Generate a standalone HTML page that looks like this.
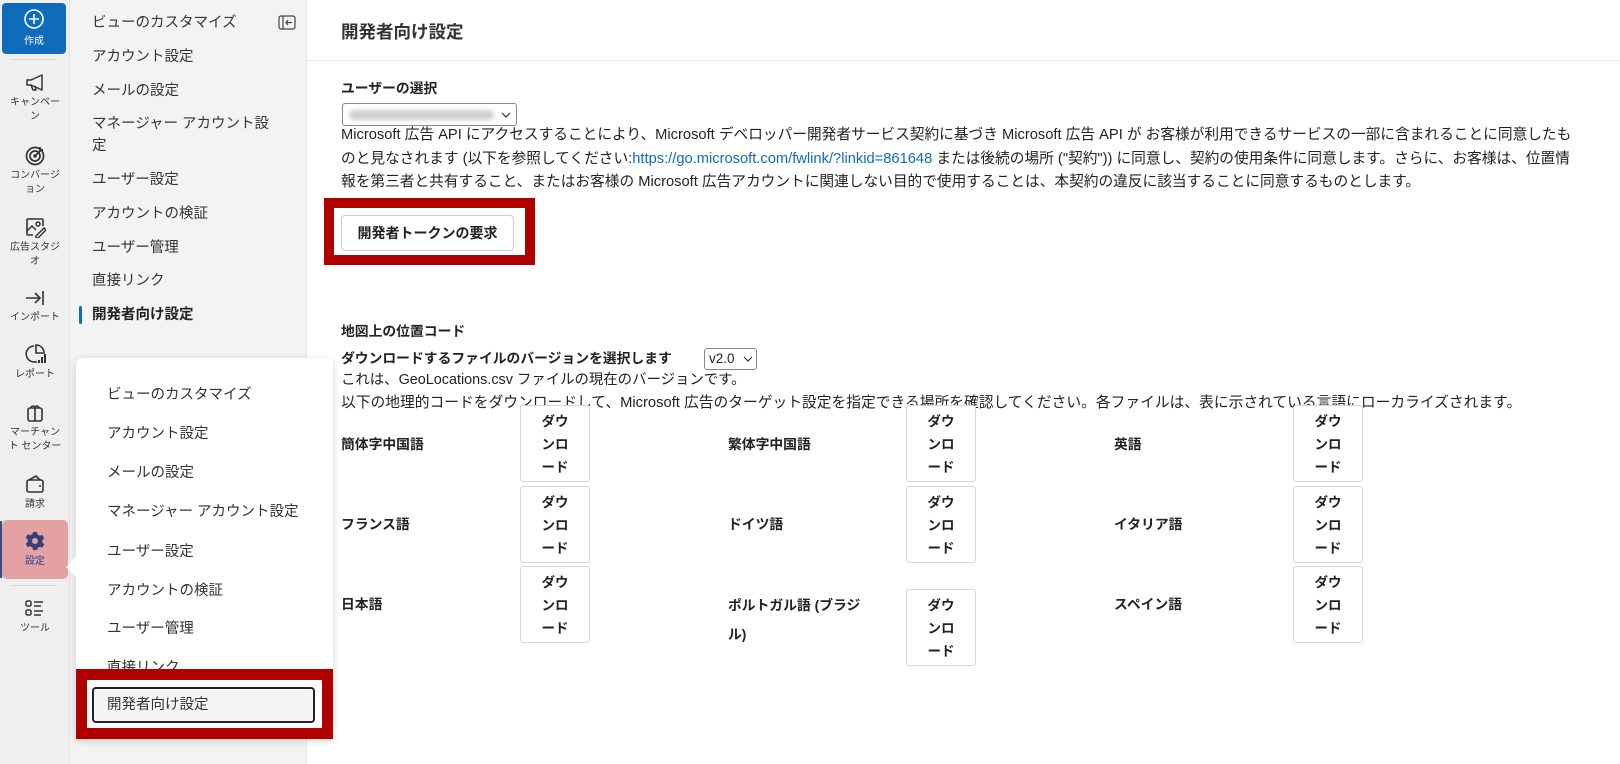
<!DOCTYPE html>
<html><head><meta charset="utf-8">
<style>
*{box-sizing:border-box;margin:0;padding:0}
body{width:1620px;height:764px;overflow:hidden;background:#fff;font-family:"Liberation Sans","Noto Sans CJK JP",sans-serif;color:#222;position:relative}
.abs{position:absolute}
#rail{left:0;top:0;width:70px;height:764px;background:#efefef;border-right:1px solid #e2e2e2}
.ri{position:absolute;left:0;width:70px;text-align:center;font-size:10px;line-height:14px;color:#333}
.ri svg{display:block;margin:0 auto 3px}
#sec{left:70px;top:0;width:237px;height:764px;background:#f3f3f3;border-right:1px solid #e6e6e6}
.si{position:absolute;left:22px;font-size:14.5px;color:#333;line-height:22px}
.main{font-size:14.4px;line-height:23.5px;color:#222}
.pi{position:absolute;left:31px;font-size:14.5px;color:#333}
.dl{position:absolute;width:70px;height:77px;border:1px solid #d6d6d6;border-radius:3px;background:#fff;font-weight:bold;font-size:13.5px;line-height:23px;text-align:center;padding-top:4px}
.lb{position:absolute;font-weight:bold;font-size:13.8px}
</style></head><body>
<div id="rail" class="abs">
  <div class="abs" style="left:2px;top:3px;width:64px;height:51px;background:#0f6cbd;border-radius:4px;color:#fff;text-align:center;font-size:10px">
    <svg width="22" height="22" viewBox="0 0 22 22" style="display:block;margin:5px auto 2px"><circle cx="11" cy="11" r="9" fill="none" stroke="#fff" stroke-width="1.6"/><path d="M11 6v10M6 11h10" stroke="#fff" stroke-width="1.6"/></svg>作成</div>
  <div class="abs" style="left:12px;top:59px;width:44px;height:1px;background:#d8d8d8"></div>
  <div class="ri" style="top:73px"><svg width="22" height="20" viewBox="0 0 22 20"><path d="M3 7h4l11-5v15L7 12H3z M7 12l2 5h3l-1-4" fill="none" stroke="#333" stroke-width="1.5" stroke-linejoin="round"/></svg>キャンペー<br>ン</div>
  <div class="ri" style="top:144px"><svg width="22" height="22" viewBox="0 0 22 22"><circle cx="11" cy="12" r="8.5" fill="none" stroke="#333" stroke-width="1.7"/><circle cx="11" cy="12" r="5" fill="none" stroke="#333" stroke-width="1.7"/><circle cx="11" cy="12" r="1.7" fill="#333"/><path d="M11 12l7-7M16 3v3h3" stroke="#333" stroke-width="1.7" fill="none"/></svg>コンバージ<br>ョン</div>
  <div class="ri" style="top:216px"><svg width="22" height="22" viewBox="0 0 22 22"><path d="M9 19H4a1 1 0 0 1-1-1V4a1 1 0 0 1 1-1h14a1 1 0 0 1 1 1v6" fill="none" stroke="#333" stroke-width="1.6"/><circle cx="14" cy="8" r="2" fill="none" stroke="#333" stroke-width="1.5"/><path d="M3 15l5-5 4 4M12 20l8-8 2 2-8 8h-2z" fill="none" stroke="#333" stroke-width="1.5"/></svg>広告スタジ<br>オ</div>
  <div class="ri" style="top:288px"><svg width="22" height="20" viewBox="0 0 22 20"><path d="M2 10h14M11 5l5 5-5 5M19 3v14" fill="none" stroke="#333" stroke-width="1.6"/></svg>インポート</div>
  <div class="ri" style="top:343px"><svg width="22" height="22" viewBox="0 0 22 22"><path d="M10 3a8 8 0 1 0 3 15.5" fill="none" stroke="#333" stroke-width="1.6"/><path d="M12 2v8h8a8 8 0 0 0-8-8z" fill="none" stroke="#333" stroke-width="1.6"/><path d="M15 20v-3M18 20v-6M21 20v-9" stroke="#333" stroke-width="2"/></svg>レポート</div>
  <div class="ri" style="top:401px"><svg width="22" height="22" viewBox="0 0 22 22"><rect x="4" y="7" width="14" height="13" rx="2" fill="none" stroke="#333" stroke-width="1.6"/><path d="M11 7v13M7 7a2 2 0 1 1 4 0 2 2 0 1 1 4 0" fill="none" stroke="#333" stroke-width="1.6"/></svg>マーチャン<br>ト センター</div>
  <div class="ri" style="top:473px"><svg width="22" height="22" viewBox="0 0 22 22"><rect x="3" y="7" width="16" height="12" rx="2" fill="none" stroke="#333" stroke-width="1.6"/><path d="M5 7l7-4 4 4M15 13h2" stroke="#333" stroke-width="1.6" fill="none"/></svg>請求</div>
  <div class="abs" style="left:2px;top:520px;width:66px;height:59px;background:#e3a1a4;border-radius:5px"></div>
  <div class="abs" style="left:0;top:521px;width:2px;height:57px;background:#3a4a8a"></div>
  <div class="ri" style="top:530px;color:#3a3f7a"><svg width="22" height="22" viewBox="0 0 22 22"><path d="M9 2h4l.6 2.6 2.2 1.2 2.5-.9 2 3.4-2 1.8v2.4l2 1.8-2 3.4-2.5-.9-2.2 1.2L13 20H9l-.6-2.6-2.2-1.2-2.5.9-2-3.4 2-1.8V9.5l-2-1.8 2-3.4 2.5.9 2.2-1.2z" fill="#3a3f7a"/><circle cx="11" cy="11" r="3" fill="#e3a1a4"/></svg>設定</div>
  <div class="abs" style="left:12px;top:585px;width:44px;height:1px;background:#d8d8d8"></div>
  <div class="ri" style="top:599px"><svg width="22" height="20" viewBox="0 0 22 20"><rect x="2" y="2" width="5" height="5" rx="1.5" fill="none" stroke="#333" stroke-width="1.5"/><rect x="2" y="11" width="5" height="5" rx="1.5" fill="none" stroke="#333" stroke-width="1.5"/><path d="M10 3h9M10 7h7M10 12h9M10 16h7" stroke="#333" stroke-width="1.5"/></svg>ツール</div>
</div>
<div id="sec" class="abs">
  <div class="si" style="top:12px">ビューのカスタマイズ</div>
  <svg class="abs" style="left:208px;top:15px" width="18" height="15" viewBox="0 0 18 15"><rect x="1" y="1" width="16" height="13" rx="2" fill="none" stroke="#444" stroke-width="1.2"/><path d="M5 1v13M14 7.5H8M10 5l-2 2.5 2 2.5" fill="none" stroke="#444" stroke-width="1.2"/></svg>
  <div class="si" style="top:46px">アカウント設定</div>
  <div class="si" style="top:80px">メールの設定</div>
  <div class="si" style="top:113px;width:190px">マネージャー アカウント設<br>定</div>
  <div class="si" style="top:169px">ユーザー設定</div>
  <div class="si" style="top:203px">アカウントの検証</div>
  <div class="si" style="top:237px">ユーザー管理</div>
  <div class="si" style="top:270px">直接リンク</div>
  <div class="abs" style="left:9px;top:306px;width:3px;height:18px;background:#0f6cbd;border-radius:2px"></div>
  <div class="si" style="top:304px;font-weight:bold;color:#222">開発者向け設定</div>
</div>

<div class="abs" style="left:341px;top:19px;font-size:17.5px;font-weight:bold;color:#333">開発者向け設定</div>
<div class="abs" style="left:307px;top:60px;width:1313px;height:1px;background:#ececec"></div>

<div class="abs main" style="left:341px;top:77px;font-weight:bold;font-size:13.8px">ユーザーの選択</div>
<div class="abs" style="left:342px;top:103px;width:175px;height:23px;border:1px solid #888;border-radius:3px;background:#fff">
  <div class="abs" style="left:6px;top:6px;width:145px;height:10px;background:#cfcfcf;border-radius:5px;filter:blur(2px)"></div>
  <svg class="abs" style="left:158px;top:8px" width="10" height="7" viewBox="0 0 10 7"><path d="M1 1l4 4 4-4" fill="none" stroke="#333" stroke-width="1.2"/></svg>
</div>
<div class="abs main" style="left:341px;top:124px;width:1270px;white-space:nowrap;font-size:14.7px">Microsoft 広告 API にアクセスすることにより、Microsoft デベロッパー開発者サービス契約に基づき Microsoft 広告 API が お客様が利用できるサービスの一部に含まれることに同意したも<br>のと見なされます (以下を参照してください:<span style="color:#0f6cbd">https://go.microsoft.com/fwlink/?linkid=861648</span> または後続の場所 ("契約")) に同意し、契約の使用条件に同意します。さらに、お客様は、位置情<br>報を第三者と共有すること、またはお客様の Microsoft 広告アカウントに関連しない目的で使用することは、本契約の違反に該当することに同意するものとします。</div>

<div class="abs" style="left:324px;top:198px;width:211px;height:67px;border:10px solid #b00000"></div>
<div class="abs" style="left:341px;top:215px;width:173px;height:36px;border:1px solid #cfcfcf;border-radius:4px;background:#fff;font-weight:bold;font-size:14px;text-align:center;line-height:34px">開発者トークンの要求</div>

<div class="abs main" style="left:341px;top:320px;font-weight:bold;font-size:13.8px">地図上の位置コード</div>
<div class="abs main" style="left:341px;top:347px;font-weight:bold;font-size:13.8px">ダウンロードするファイルのバージョンを選択します</div>
<div class="abs" style="left:704px;top:348px;width:53px;height:22px;border:1px solid #888;border-radius:3px;font-size:13.5px;line-height:20px;padding-left:4px">v2.0<svg class="abs" style="left:38px;top:7px" width="10" height="7" viewBox="0 0 10 7"><path d="M1 1l4 4 4-4" fill="none" stroke="#333" stroke-width="1.2"/></svg></div>
<div class="abs main" style="left:341px;top:369px">これは、GeoLocations.csv ファイルの現在のバージョンです。</div>
<div class="abs main" style="left:341px;top:392px;white-space:nowrap;font-size:14.75px">以下の地理的コードをダウンロードして、Microsoft 広告のターゲット設定を指定できる場所を確認してください。各ファイルは、表に示されている言語にローカライズされます。</div>

<div class="lb" style="left:341px;top:433px">簡体字中国語</div>
<div class="dl" style="left:520px;top:405px">ダウ<br>ンロ<br>ード</div>
<div class="lb" style="left:728px;top:433px">繁体字中国語</div>
<div class="dl" style="left:906px;top:405px">ダウ<br>ンロ<br>ード</div>
<div class="lb" style="left:1114px;top:433px">英語</div>
<div class="dl" style="left:1293px;top:405px">ダウ<br>ンロ<br>ード</div>

<div class="lb" style="left:341px;top:513px">フランス語</div>
<div class="dl" style="left:520px;top:486px">ダウ<br>ンロ<br>ード</div>
<div class="lb" style="left:728px;top:513px">ドイツ語</div>
<div class="dl" style="left:906px;top:486px">ダウ<br>ンロ<br>ード</div>
<div class="lb" style="left:1114px;top:513px">イタリア語</div>
<div class="dl" style="left:1293px;top:486px">ダウ<br>ンロ<br>ード</div>

<div class="lb" style="left:341px;top:593px">日本語</div>
<div class="dl" style="left:520px;top:566px">ダウ<br>ンロ<br>ード</div>
<div class="lb" style="left:728px;top:591px;line-height:29px;width:150px">ポルトガル語 (ブラジ<br>ル)</div>
<div class="dl" style="left:906px;top:589px">ダウ<br>ンロ<br>ード</div>
<div class="lb" style="left:1114px;top:593px">スペイン語</div>
<div class="dl" style="left:1293px;top:566px">ダウ<br>ンロ<br>ード</div>

<!-- popup -->
<div class="abs" style="left:76px;top:358px;width:257px;height:381px;background:#fff;border-radius:6px;box-shadow:0 2px 8px rgba(0,0,0,.18)">
  <div class="abs" style="left:-7px;top:202px;width:14px;height:14px;background:#fff;transform:rotate(45deg)"></div>
  <div class="pi" style="top:25px">ビューのカスタマイズ</div>
  <div class="pi" style="top:64px">アカウント設定</div>
  <div class="pi" style="top:103px">メールの設定</div>
  <div class="pi" style="top:142px">マネージャー アカウント設定</div>
  <div class="pi" style="top:182px">ユーザー設定</div>
  <div class="pi" style="top:221px">アカウントの検証</div>
  <div class="pi" style="top:259px">ユーザー管理</div>
  <div class="pi" style="top:298px">直接リンク</div>
</div>
<div class="abs" style="left:76px;top:669px;width:257px;height:70px;border:11px solid #b00000;background:#fff"></div>
<div class="abs" style="left:92px;top:687px;width:223px;height:36px;border:2px solid #222;border-radius:4px;background:#f5f5f5;font-size:14.5px;line-height:32px;padding-left:13px;color:#333">開発者向け設定</div>
</body></html>
